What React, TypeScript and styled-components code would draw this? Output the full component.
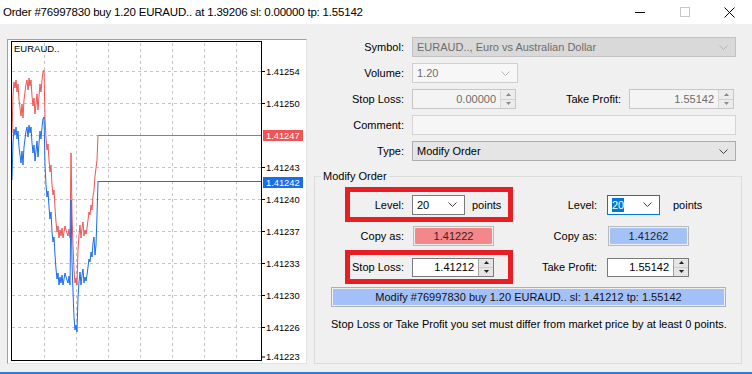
import React from "react";
import styled, { createGlobalStyle, css } from "styled-components";

const GlobalStyle = createGlobalStyle`
  html, body {
    margin: 0;
    padding: 0;
    background: #f0f0f0;
  }
  body {
    font-family: "Liberation Sans", Arial, sans-serif;
    font-size: 11px;
    color: #000;
  }
`;

const Window = styled.div`
  width: 752px;
  height: 374px;
  box-sizing: border-box;
  display: flex;
  flex-direction: column;
  background: #f0f0f0;
  border-bottom: 2px solid #2b7fd0;
  overflow: hidden;
`;

const TitleBar = styled.div`
  flex: none;
  height: 24px;
  background: #fff;
  display: flex;
  align-items: center;
`;

const Title = styled.div`
  padding-left: 3px;
  font-size: 11.5px;
  letter-spacing: -0.2px;
`;

const Caption = styled.div`
  margin-left: auto;
  height: 100%;
  display: flex;
`;

const CaptionButton = styled.div`
  width: 45px;
  display: flex;
  align-items: center;
  justify-content: center;
`;

const Body = styled.div`
  flex: 1;
  display: flex;
  padding-top: 13px;
`;

const ChartPanel = styled.div`
  margin: 2px 0 0 7px;
  width: 300px;
  height: 325px;
  box-sizing: border-box;
  border: 1px solid;
  border-color: #a0a0a0 #e3e3e3 #e3e3e3 #a0a0a0;
  background: #fff;
  svg {
    display: block;
  }
`;

const Form = styled.div`
  margin-left: 7px;
  width: 428px;
  display: flex;
  flex-direction: column;
`;

const FormRow = styled.div<{ $last?: boolean }>`
  display: grid;
  grid-template-columns: 90px 1fr;
  column-gap: 8px;
  align-items: center;
  height: 20px;
  margin-bottom: ${(p) => (p.$last ? 0 : 6)}px;
`;

const Label = styled.div<{ $w?: number }>`
  text-align: right;
  white-space: nowrap;
  ${(p) => p.$w && css`width: ${p.$w}px; flex: none;`}
`;

const Inline = styled.div`
  display: flex;
  align-items: center;
`;

const FlexLabel = styled.div`
  flex: 1;
  text-align: right;
  margin-right: 8px;
`;

type ComboKind = "disabled" | "dim" | "type" | "edit" | "focus";

const comboStyles: Record<ComboKind, ReturnType<typeof css>> = {
  disabled: css`background: #d9d9d9; border-color: #c2c2c2; color: #6d6d6d;`,
  dim: css`background: #f7f7f7; border-color: #cfcfcf; color: #6d6d6d;`,
  type: css`background: #e5e5e5; border-color: #adadad; color: #000;`,
  edit: css`background: #fff; border-color: #7a7a7a; color: #000;`,
  focus: css`background: #fff; border-color: #0078d7; color: #000;`,
};

const ComboBox = styled.div<{ $kind: ComboKind; $w: number }>`
  width: ${(p) => p.$w}px;
  height: 20px;
  box-sizing: border-box;
  border: 1px solid;
  display: flex;
  align-items: center;
  padding: 0 7px 0 4px;
  ${(p) => comboStyles[p.$kind]}
  span.value {
    flex: 1;
    white-space: nowrap;
  }
`;

const Selected = styled.span`
  background: #0078d7;
  color: #fff;
  padding: 1px 0;
`;

const TextBox = styled.div<{ $w: number }>`
  width: ${(p) => p.$w}px;
  height: 20px;
  box-sizing: border-box;
  border: 1px solid #d4d4d4;
  background: #f6f6f6;
`;

const SpinBox = styled.div<{ $active?: boolean; $w: number; $h: number }>`
  width: ${(p) => p.$w}px;
  height: ${(p) => p.$h}px;
  box-sizing: border-box;
  display: flex;
  border: 1px solid ${(p) => (p.$active ? "#7a7a7a" : "#c6c6c6")};
  background: ${(p) => (p.$active ? "#fff" : "#f4f4f4")};
  color: ${(p) => (p.$active ? "#000" : "#6d6d6d")};
`;

const SpinValue = styled.div`
  flex: 1;
  display: flex;
  align-items: center;
  justify-content: flex-end;
  padding-right: 4px;
`;

const SpinButtons = styled.div<{ $active?: boolean }>`
  width: 14px;
  display: flex;
  flex-direction: column;
  border-left: 1px solid ${(p) => (p.$active ? "#a0a0a0" : "#d6d6d6")};
  background: ${(p) => (p.$active ? "#e5e5e5" : "#ececec")};
`;

const SpinHalf = styled.div<{ $down?: boolean }>`
  flex: 1;
  display: flex;
  align-items: center;
  justify-content: center;
  ${(p) => p.$down && css`border-top: 1px solid #cfcfcf;`}
`;

const Group = styled.fieldset`
  margin: 9px 0 0 0;
  padding: 0;
  height: 194px;
  box-sizing: border-box;
  border: 1px solid #dcdcdc;
  min-width: 0;
  legend {
    margin-left: 6px;
    padding: 0 2px;
    line-height: 13px;
  }
`;

const GroupRow = styled.div<{ $mt: number }>`
  display: flex;
  align-items: center;
  gap: 22px;
  padding-left: 35px;
  margin-top: ${(p) => p.$mt}px;
`;

const Cell = styled.div<{ $highlight?: boolean; $w: number; $h: number; $gap: number }>`
  width: ${(p) => p.$w}px;
  height: ${(p) => p.$h}px;
  display: flex;
  align-items: center;
  gap: ${(p) => p.$gap}px;
  ${(p) => p.$highlight && css`outline: 5px solid #e81e25;`}
`;

const Points = styled.div<{ $ml: number }>`
  margin-left: ${(p) => p.$ml}px;
`;

const CopyButton = styled.div<{ $tone: "red" | "blue" }>`
  width: 81px;
  height: 20px;
  margin-left: 1px;
  box-sizing: border-box;
  border: 1px solid #b9b9b9;
  padding: 1px;
  display: flex;
  div {
    flex: 1;
    display: flex;
    align-items: center;
    justify-content: center;
    border-radius: 1px;
    background: ${(p) => (p.$tone === "red" ? "#f4878a" : "#a4c2f6")};
    color: ${(p) => (p.$tone === "red" ? "#3a1f1f" : "#1f2533")};
  }
`;

const ModifyButton = styled.div`
  margin: 8px 0 0 16px;
  width: 395px;
  height: 20px;
  box-sizing: border-box;
  border: 1px solid #b0b0b0;
  padding: 1px;
  display: flex;
  div {
    flex: 1;
    display: flex;
    align-items: center;
    justify-content: center;
    background: #a3c1f8;
    color: #111;
  }
`;

const Hint = styled.div`
  margin: 11px 0 0 16px;
  line-height: 13px;
  white-space: nowrap;
`;

const Chevron = ({ color }: { color: string }) => (
  <svg width="9" height="5" viewBox="0 0 9 5">
    <polyline points="0.5,0.5 4.5,4.5 8.5,0.5" fill="none" stroke={color} strokeWidth="1" />
  </svg>
);

const Arrow = ({ down, color }: { down?: boolean; color: string }) => (
  <svg width="5" height="3" viewBox="0 0 5 3">
    <polygon points={down ? "0,0 5,0 2.5,3" : "0,3 5,3 2.5,0"} fill={color} />
  </svg>
);

const Spin = ({ value, w, h, active }: { value: string; w: number; h: number; active?: boolean }) => (
  <SpinBox $w={w} $h={h} $active={active}>
    <SpinValue>{value}</SpinValue>
    <SpinButtons $active={active}>
      <SpinHalf>
        <Arrow color={active ? "#222" : "#8a8a8a"} />
      </SpinHalf>
      <SpinHalf $down>
        <Arrow down color={active ? "#222" : "#8a8a8a"} />
      </SpinHalf>
    </SpinButtons>
  </SpinBox>
);

// ask price, one value per pixel from x=12 to x=98
const ask = [
  133, 95, 82, 88, 80, 92, 84, 100, 108, 116, 104, 118, 100, 92, 84, 80, 90, 78, 86, 80, 96, 106, 98,
  114, 104, 94, 110, 96, 84, 92, 80, 72, 70, 118, 138, 150, 144, 160, 172, 165, 185, 195, 190, 208,
  222, 232, 226, 238, 230, 236, 228, 238, 232, 226, 230, 233, 236, 229, 238, 153, 215, 245, 270, 283,
  278, 285, 250, 235, 225, 238, 228, 222, 236, 230, 234, 228, 220, 212, 215, 205, 210, 196, 190, 176,
  168, 160, 136,
];

const bidEnd: Record<number, number> = { 95: 255, 96: 245, 97: 215, 98: 182 };

const askPoints = ask.map((y, i) => `${12 + i},${y}`).join(" ");
const bidPoints = ask.map((y, i) => `${12 + i},${bidEnd[12 + i] ?? y + 47}`).join(" ");

const gridY = [71.5, 103.5, 135.5, 167.5, 199.5, 231.5, 263.5, 295.5, 327.5];
const gridX = [44.5, 76.5, 108.5, 140.5, 172.5, 204.5, 236.5];

const prices: [string, number][] = [
  ["1.41254", 71.5],
  ["1.41250", 103.5],
  ["1.41243", 167.5],
  ["1.41240", 199.5],
  ["1.41237", 231.5],
  ["1.41233", 263.5],
  ["1.41230", 295.5],
  ["1.41226", 327.5],
  ["1.41223", 357],
];

const RED = "#f05454";
const BLUE = "#1a6cf0";
const AXIS_FONT = "Liberation Sans, Arial, sans-serif";

const Chart = () => (
  <svg width="298" height="323" viewBox="8 40 298 323">
    {gridY.map((y) => (
      <line key={`h${y}`} x1="12" x2="261" y1={y} y2={y} stroke="#c4c4c4" strokeDasharray="3 3" />
    ))}
    {gridX.map((x) => (
      <line key={`v${x}`} x1={x} x2={x} y1="43" y2="360" stroke="#c4c4c4" strokeDasharray="3 3" />
    ))}
    <polyline points={askPoints} fill="none" stroke={RED} strokeWidth="1" />
    <rect x="97.5" y="135" width="164" height="1" fill={RED} />
    <polyline points={bidPoints} fill="none" stroke={BLUE} strokeWidth="1" />
    <rect x="97.5" y="181" width="164" height="1" fill={BLUE} />
    <rect x="11.5" y="41.5" width="250" height="319" fill="none" stroke="#000" />
    <text x="14" y="52" fontSize="9.5" fontFamily={AXIS_FONT} fill="#000">
      EURAUD..
    </text>
    {prices.map(([p, y]) => (
      <g key={p}>
        <rect x="262" y={y - 0.5} width="3" height="1" fill="#000" />
        <text x="266" y={y + 3.4} fontSize="9.3" fontFamily={AXIS_FONT} fill="#000">
          {p}
        </text>
      </g>
    ))}
    <rect x="263" y="130" width="40" height="11" fill={RED} />
    <text x="266" y="139" fontSize="9.3" fontFamily={AXIS_FONT} fill="#fff">
      1.41247
    </text>
    <rect x="263" y="177" width="40" height="11" fill={BLUE} />
    <text x="266" y="186" fontSize="9.3" fontFamily={AXIS_FONT} fill="#fff">
      1.41242
    </text>
  </svg>
);

const App = () => {
  return (
    <>
      <GlobalStyle />
      <Window>
        <TitleBar>
          <Title>Order #76997830 buy 1.20 EURAUD.. at 1.39206 sl: 0.00000 tp: 1.55142</Title>
          <Caption>
            <CaptionButton>
              <svg width="10" height="10" viewBox="0 0 10 10" shapeRendering="crispEdges">
                <line x1="0" x2="10" y1="5.5" y2="5.5" stroke="#000" />
              </svg>
            </CaptionButton>
            <CaptionButton>
              <svg width="10" height="10" viewBox="0 0 10 10" shapeRendering="crispEdges">
                <rect x="0.5" y="0.5" width="9" height="9" fill="none" stroke="#c8c8c8" />
              </svg>
            </CaptionButton>
            <CaptionButton>
              <svg width="11" height="11" viewBox="0 0 11 11">
                <path d="M0.5 0.5 L10.5 10.5 M10.5 0.5 L0.5 10.5" stroke="#000" strokeWidth="1" />
              </svg>
            </CaptionButton>
          </Caption>
        </TitleBar>
        <Body>
          <ChartPanel>
            <Chart />
          </ChartPanel>
          <Form>
            <FormRow>
              <Label>Symbol:</Label>
              <ComboBox $kind="disabled" $w={324}>
                <span className="value">EURAUD.., Euro vs Australian Dollar</span>
                <Chevron color="#b5b5b5" />
              </ComboBox>
            </FormRow>
            <FormRow>
              <Label>Volume:</Label>
              <ComboBox $kind="dim" $w={106}>
                <span className="value">1.20</span>
                <Chevron color="#b5b5b5" />
              </ComboBox>
            </FormRow>
            <FormRow>
              <Label>Stop Loss:</Label>
              <Inline>
                <Spin value="0.00000" w={104} h={20} />
                <FlexLabel>Take Profit:</FlexLabel>
                <div style={{ marginRight: 8 }}>
                  <Spin value="1.55142" w={105} h={20} />
                </div>
              </Inline>
            </FormRow>
            <FormRow>
              <Label>Comment:</Label>
              <TextBox $w={324} />
            </FormRow>
            <FormRow $last>
              <Label>Type:</Label>
              <ComboBox $kind="type" $w={324}>
                <span className="value">Modify Order</span>
                <Chevron color="#404040" />
              </ComboBox>
            </FormRow>
            <Group>
              <legend>Modify Order</legend>
              <GroupRow $mt={9}>
                <Cell $highlight $w={158} $h={25} $gap={8}>
                  <Label $w={54}>Level:</Label>
                  <ComboBox $kind="edit" $w={53}>
                    <span className="value">20</span>
                    <Chevron color="#404040" />
                  </ComboBox>
                  <Points $ml={-1}>points</Points>
                </Cell>
                <Cell $w={180} $h={25} $gap={10}>
                  <Label $w={67}>Level:</Label>
                  <ComboBox $kind="focus" $w={53}>
                    <span className="value">
                      <Selected>20</Selected>
                    </span>
                    <Chevron color="#404040" />
                  </ComboBox>
                  <Points $ml={3}>points</Points>
                </Cell>
              </GroupRow>
              <GroupRow $mt={9}>
                <Cell $w={158} $h={20} $gap={8}>
                  <Label $w={54}>Copy as:</Label>
                  <CopyButton $tone="red">
                    <div>1.41222</div>
                  </CopyButton>
                </Cell>
                <Cell $w={180} $h={20} $gap={10}>
                  <Label $w={67}>Copy as:</Label>
                  <CopyButton $tone="blue">
                    <div>1.41262</div>
                  </CopyButton>
                </Cell>
              </GroupRow>
              <GroupRow $mt={9}>
                <Cell $highlight $w={158} $h={24} $gap={8}>
                  <Label $w={54}>Stop Loss:</Label>
                  <Spin value="1.41212" w={82} h={19} active />
                </Cell>
                <Cell $w={180} $h={24} $gap={10}>
                  <Label $w={67}>Take Profit:</Label>
                  <Spin value="1.55142" w={82} h={19} active />
                </Cell>
              </GroupRow>
              <ModifyButton>
                <div>Modify #76997830 buy 1.20 EURAUD.. sl: 1.41212 tp: 1.55142</div>
              </ModifyButton>
              <Hint>Stop Loss or Take Profit you set must differ from market price by at least 0 points.</Hint>
            </Group>
          </Form>
        </Body>
      </Window>
    </>
  );
};

export default App;
